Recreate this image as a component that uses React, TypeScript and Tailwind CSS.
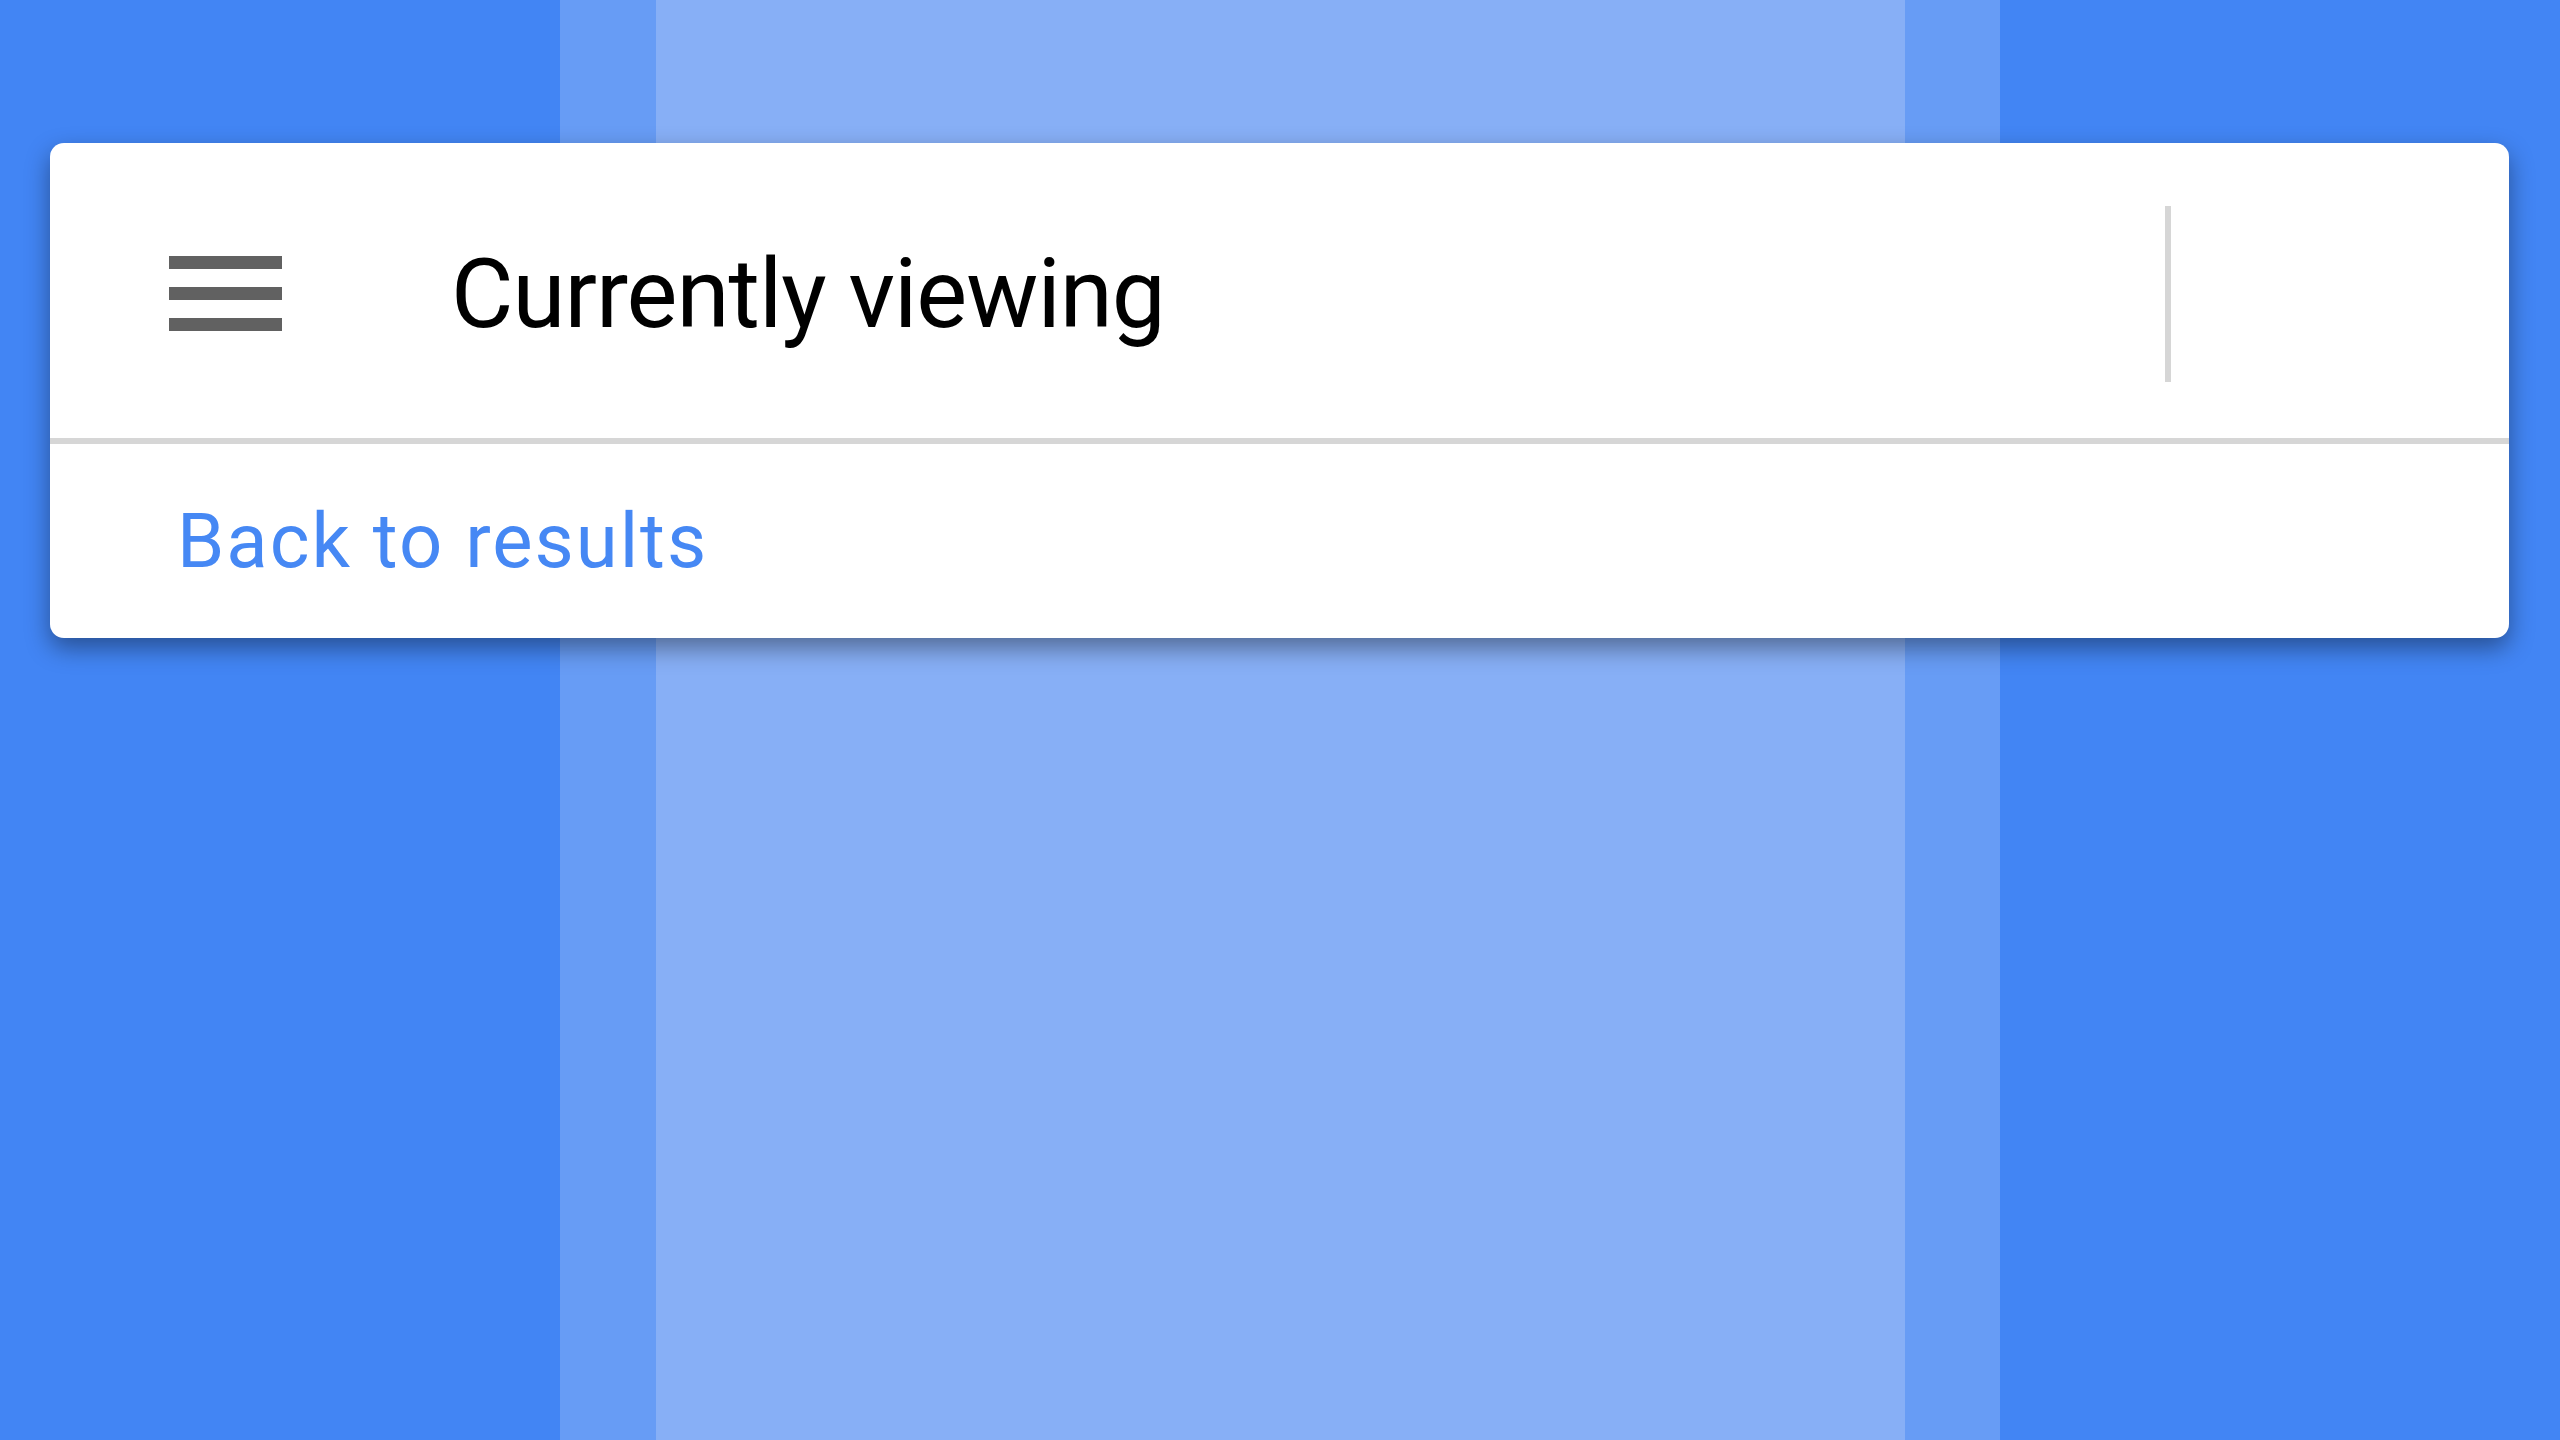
export default function App() {
  return (
    <main className="relative h-[1440px] w-[2560px] overflow-hidden font-['Roboto',sans-serif]">
      {/* background columns */}
      <div className="flex h-full w-full">
        <div className="w-[560px] bg-[#4285f4]" />
        <div className="w-[96px] bg-[#679cf5]" />
        <div className="flex-1 bg-[#87aff6]" />
        <div className="w-[95px] bg-[#679cf5]" />
        <div className="w-[560px] bg-[#4285f4]" />
      </div>

      {/* floating card */}
      <div className="absolute left-[50px] top-[143px] w-[2459px] rounded-[14px] bg-white shadow-[0_10px_24px_rgba(0,0,0,0.4)]">
        <div className="flex h-[295px] items-center pt-[6px]">
          <div className="ml-[119px] flex w-[113px] flex-col gap-[18px]">
            <span className="h-[13px] w-full bg-[#616161]" />
            <span className="h-[13px] w-full bg-[#616161]" />
            <span className="h-[13px] w-full bg-[#616161]" />
          </div>
          <h1 className="ml-[169px] text-[96px] leading-none tracking-[-1px] text-black">Currently viewing</h1>
          <div className="ml-auto mr-[338px] h-[176px] w-[6px] bg-[#d6d6d6]" />
        </div>
        <div className="h-[6px] bg-[#d6d6d6]" />
        <div className="flex h-[194px] items-center">
          <a className="ml-[127px] text-[76px] leading-none tracking-[2px] text-[#4688f4]">Back to results</a>
        </div>
      </div>
    </main>
  )
}
